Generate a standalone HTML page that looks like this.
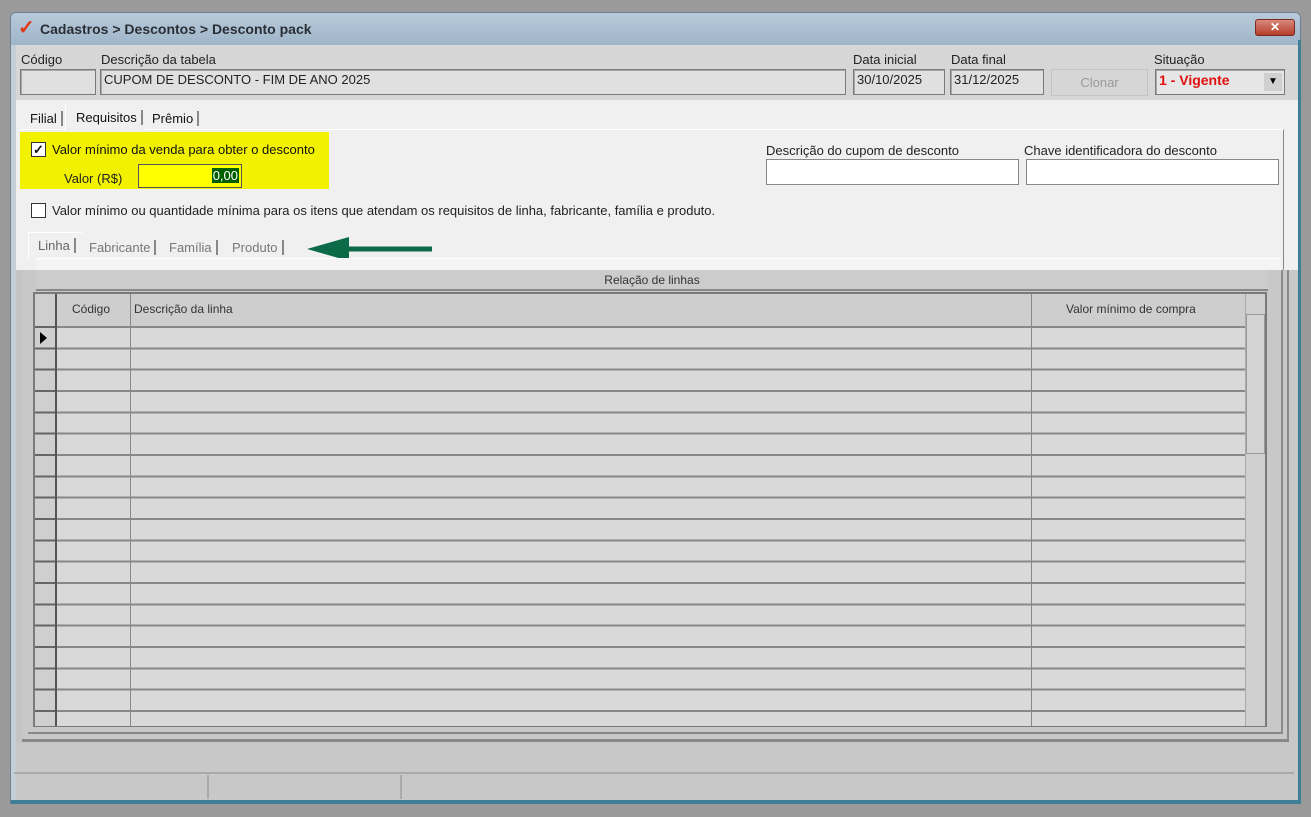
<!DOCTYPE html>
<html><head><meta charset="utf-8"><style>
*{margin:0;padding:0;box-sizing:border-box}
body{width:1311px;height:817px;background:#9a9a9a;position:relative;overflow:hidden;font-family:"Liberation Sans",sans-serif;font-size:13px;color:#111}
.a{position:absolute}
.inp{position:absolute;background:#e0e0e0;border:1px solid #7a7a7a;box-shadow:inset 1px 1px 0 #a8a8a8;font-size:13px;padding:2px 3px;color:#222}
.lbl{position:absolute;font-size:13px;color:#222}
.tab{position:absolute;font-size:13px;border-right:2px solid #888;padding:0 4px}
.gt{position:absolute;font-size:12px;color:#333}
</style></head><body>
<!-- window frame -->
<div class="a" style="left:10px;top:12px;width:1291px;height:792px;background:#c4cfd8;border:1px solid #6d8193;border-radius:6px 6px 0 0"></div>
<div class="a" style="left:11px;top:13px;width:1289px;height:32px;background:linear-gradient(#b8cadb,#9fb5c9);border-radius:5px 5px 0 0"></div>
<div class="a" style="left:18px;top:18px;color:#e03a1a;font-weight:bold;font-size:20px;line-height:20px">✓</div>
<div class="a" style="left:40px;top:21px;font-size:14px;font-weight:bold;color:#2a2f36">Cadastros &gt; Descontos &gt; Desconto pack</div>
<div class="a" style="left:1255px;top:19px;width:40px;height:17px;background:linear-gradient(#d88a7c,#b53f2c);border:1px solid #7a2a20;border-radius:3px;color:#fff;font-weight:bold;font-size:12px;text-align:center;line-height:15px">✕</div>
<div class="a" style="left:1298px;top:40px;width:3px;height:764px;background:#3f7f95"></div>
<div class="a" style="left:11px;top:800px;width:1290px;height:4px;background:#3f7f95"></div>
<!-- header area -->
<div class="a" style="left:16px;top:45px;width:1282px;height:55px;background:#d6d6d6"></div>
<div class="lbl" style="left:21px;top:52px">Código</div>
<div class="inp" style="left:20px;top:69px;width:76px;height:26px"></div>
<div class="lbl" style="left:101px;top:52px">Descrição da tabela</div>
<div class="inp" style="left:100px;top:69px;width:746px;height:26px">CUPOM DE DESCONTO - FIM DE ANO 2025</div>
<div class="lbl" style="left:853px;top:52px">Data inicial</div>
<div class="inp" style="left:853px;top:69px;width:92px;height:26px">30/10/2025</div>
<div class="lbl" style="left:951px;top:52px">Data final</div>
<div class="inp" style="left:950px;top:69px;width:94px;height:26px">31/12/2025</div>
<div class="a" style="left:1051px;top:69px;width:97px;height:27px;background:#d6d6d6;border:1px solid #c4c4c4;color:#999;text-align:center;line-height:26px">Clonar</div>
<div class="lbl" style="left:1154px;top:52px">Situação</div>
<div class="inp" style="left:1155px;top:69px;width:130px;height:26px;color:#e01010;font-weight:bold;font-size:14px;background:#e6e6e6">1 - Vigente<span class="a" style="right:2px;top:3px;width:18px;height:18px;background:#d0d0d0;color:#000;font-size:10px;text-align:center;line-height:18px">▼</span></div>
<!-- tab body bright -->
<div class="a" style="left:16px;top:100px;width:1282px;height:170px;background:#f0f0f0"></div>
<div class="a" style="left:20px;top:129px;width:1264px;height:141px;border-top:1px solid #fff;border-right:1px solid #888"></div>
<div class="tab" style="left:26px;top:111px">Filial</div>
<div class="a" style="left:65px;top:105px;width:80px;height:25px;background:#f0f0f0;border-left:1px solid #fff"></div>
<div class="tab" style="left:72px;top:110px">Requisitos</div>
<div class="tab" style="left:148px;top:111px">Prêmio</div>
<div class="a" style="left:20px;top:132px;width:309px;height:57px;background:#f2f200"></div>
<div class="a" style="left:31px;top:142px;width:15px;height:15px;border:1px solid #333;background:#fff;font-size:13px;line-height:13px;text-align:center;font-weight:bold">✓</div>
<div class="lbl" style="left:52px;top:142px;color:#111">Valor mínimo da venda para obter o desconto</div>
<div class="lbl" style="left:64px;top:171px">Valor (R$)</div>
<div class="a" style="left:138px;top:164px;width:104px;height:24px;background:#ffff00;border:1px solid #555"><span class="a" style="right:2px;top:3px;background:#006000;color:#fff;font-size:13px;padding:0 1px">0,00</span></div>
<div class="a" style="left:31px;top:203px;width:15px;height:15px;border:1px solid #333;background:#fff"></div>
<div class="lbl" style="left:52px;top:203px">Valor mínimo ou quantidade mínima para os itens que atendam os requisitos de linha, fabricante, família e produto.</div>
<div class="lbl" style="left:766px;top:143px">Descrição do cupom de desconto</div>
<div class="a" style="left:766px;top:159px;width:253px;height:26px;background:#fff;border:1px solid #888"></div>
<div class="lbl" style="left:1024px;top:143px">Chave identificadora do desconto</div>
<div class="a" style="left:1026px;top:159px;width:253px;height:26px;background:#fff;border:1px solid #888"></div>
<div class="a" style="left:28px;top:232px;width:54px;height:28px;border-left:1px solid #fff;border-top:1px solid #fff"></div>
<div class="tab" style="left:34px;top:238px;color:#666">Linha</div>
<div class="tab" style="left:85px;top:240px;color:#777">Fabricante</div>
<div class="tab" style="left:165px;top:240px;color:#777">Família</div>
<div class="tab" style="left:228px;top:240px;color:#777">Produto</div>
<svg class="a" style="left:305px;top:236px" width="130" height="30"><path d="M127 13 H40" stroke="#0b6a48" stroke-width="5"/><polygon points="2,13 44,1 44,25" fill="#0b6a48"/></svg>
<div class="a" style="left:36px;top:258px;width:1245px;height:12px;background:#f4f4f4;border-top:1px solid #fff"></div>
<!-- dimmed lower -->
<div class="a" style="left:16px;top:270px;width:1282px;height:530px;background:#c8c8c8"></div>
<div class="a" style="left:16px;top:270px;width:6px;height:472px;background:#c4c4c4"></div>
<div class="a" style="left:22px;top:270px;width:1267px;height:472px;border-right:2px solid #8a8a8a;border-bottom:3px solid #888"></div>
<div class="a" style="left:28px;top:270px;width:1255px;height:464px;border-right:2px solid #8a8a8a;border-bottom:2px solid #888"></div>
<div class="a" style="left:36px;top:270px;width:1232px;height:21px;background:#cccccc;border-bottom:2px solid #888;text-align:center;font-size:12px;line-height:20px;color:#333">Relação de linhas</div>
<div class="a" style="left:33px;top:292px;width:1234px;height:435px;background:#d9d9d9;border:2px solid #7a7a7a;border-top-width:2px"></div>
<div class="a" style="left:35px;top:294px;width:1210px;height:32px;background:#cecece"></div>
<div class="a" style="left:35px;top:326px;width:1210px;height:400px;background:repeating-linear-gradient(#888 0 2px,#d9d9d9 2px 21.33px)"></div>
<div class="a" style="left:35px;top:294px;width:22px;height:432px;background:#cfcfcf;border-right:2px solid #555"></div>
<div class="a" style="left:35px;top:326px;width:20px;height:400px;background:repeating-linear-gradient(#666 0 2px,transparent 2px 21.33px)"></div>
<div class="a" style="left:130px;top:294px;width:1px;height:432px;background:#888"></div>
<div class="a" style="left:1031px;top:294px;width:1px;height:432px;background:#888"></div>
<div class="a" style="left:1245px;top:294px;width:20px;height:432px;background:#d0d0d0;border-left:1px solid #aaa"></div>
<div class="a" style="left:1246px;top:314px;width:19px;height:140px;background:#d4d4d4;border:1px solid #999"></div>
<div class="a" style="left:40px;top:332px;width:0;height:0;border-left:7px solid #000;border-top:6px solid transparent;border-bottom:6px solid transparent"></div>
<div class="gt" style="left:72px;top:302px">Código</div>
<div class="gt" style="left:134px;top:302px">Descrição da linha</div>
<div class="gt" style="left:1066px;top:302px">Valor mínimo de compra</div>
<!-- status -->
<div class="a" style="left:14px;top:772px;width:1280px;height:2px;background:#aaa"></div>
<div class="a" style="left:207px;top:775px;width:2px;height:24px;background:#aaa"></div>
<div class="a" style="left:400px;top:775px;width:2px;height:24px;background:#aaa"></div>
</body></html>
